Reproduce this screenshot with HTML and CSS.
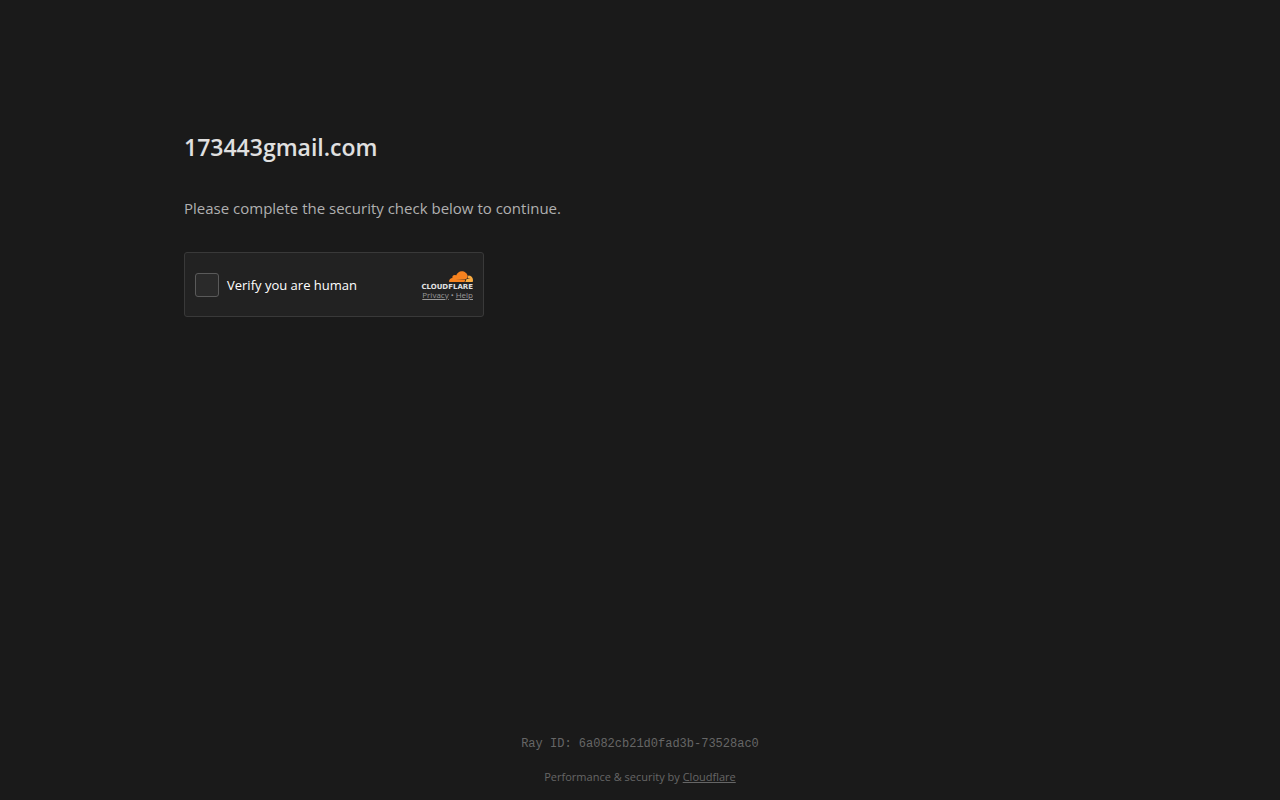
FILE: index.html
```
<!DOCTYPE html>
<html lang="en">
<head>
  <meta charset="UTF-8" />
  <meta name="viewport" content="width=device-width, initial-scale=1.0"/>
  <title>Security check</title>
  <link rel="stylesheet" href="styles.css">
</head>
<body>
  <main class="container">
    <h1>173443gmail.com</h1>
    <p class="message">Please complete the security check below to continue.</p>

    <div class="widget">
      <label class="verify">
        <input type="checkbox" id="verify">
        <span>Verify you are human</span>
      </label>

      <div class="brand">
        <svg class="cloud" viewBox="0 0 24 12" aria-hidden="true">
          <path fill="#fbad41" d="M19.400 4.600c2.600 0 4.600 2 4.600 4.500 0 .7-.1 1.300-.3 1.900h-7.400l1-2.400c.2-.4.500-.5.900-.5l3.400-.4-3.100-.4z"/>
          <path fill="#f6821f" d="M.2 11C-.4 8.600 1.300 7 3.400 6.900 3 4.600 5.400 3.400 7.100 4.500 8.200 1.900 10.200.3 12.700.3c3 0 5.500 2.100 6.100 4.900l-.8 2c-.2.5-.6.7-1.200.7L6.700 8.100l10 .4c-.8.8-.7 1.700-1.200 2.500z"/>
        </svg>
        <span class="brand-name">CLOUDFLARE</span>
        <div class="links">
          <a href="#">Privacy</a>
          <span>•</span>
          <a href="#">Help</a>
        </div>
      </div>
    </div>
  </main>

  <footer class="footer">
    <div class="ray">Ray ID: <code>6a082cb21d0fad3b-73528ac0</code></div>
    <div class="credit">Performance &amp; security by <a href="#">Cloudflare</a></div>
  </footer>
</body>
</html>
```

FILE: styles.css
```
* {
  box-sizing: border-box;
}

body {
  font-family: 'Segoe UI', 'Open Sans', sans-serif;
  background: #1a1a1a;
  color: #e0e0e0;
  margin: 0;
  min-height: 100vh;
  display: flex;
  flex-direction: column;
}

.container {
  width: 100%;
  max-width: 960px;
  margin: 0 auto;
  padding: 128px 24px 32px;
  flex: 1;
}

h1 {
  margin: 0;
  font-size: 23px;
  line-height: 38px;
  font-weight: 600;
}

.message {
  margin: 30px 0 32px;
  font-size: 15px;
  line-height: 24px;
  color: #b0b0b0;
}

.widget {
  display: flex;
  align-items: center;
  justify-content: space-between;
  max-width: 300px;
  height: 65px;
  padding: 0 10px;
  background: #222;
  border: 1px solid #393939;
  border-radius: 3px;
}

.verify {
  display: flex;
  align-items: center;
  gap: 8px;
  font-size: 13px;
  color: #fff;
  cursor: pointer;
}

.verify input {
  appearance: none;
  width: 24px;
  height: 24px;
  margin: 0;
  background: #2a2a2a;
  border: 1px solid #5a5a5a;
  border-radius: 3px;
}

.brand {
  display: flex;
  flex-direction: column;
  align-items: flex-end;
}

.cloud {
  width: 24px;
  height: 12px;
}

.brand-name {
  font-family: 'DejaVu Sans', sans-serif;
  font-size: 7px;
  line-height: 8px;
  font-weight: 700;
  color: #e0e0e0;
}

.links {
  display: flex;
  gap: 2px;
  font-size: 8px;
  line-height: 8px;
  color: #999;
}

.links a,
.credit a {
  color: inherit;
}

.footer {
  padding: 0 24px 14px;
  text-align: center;
  font-size: 11px;
  line-height: 18px;
  color: #666;
}

.ray,
.ray code {
  font-family: 'Courier New', 'Liberation Mono', monospace;
  font-size: 12px;
  line-height: 20px;
}

.ray {
  margin-bottom: 14px;
}
```
